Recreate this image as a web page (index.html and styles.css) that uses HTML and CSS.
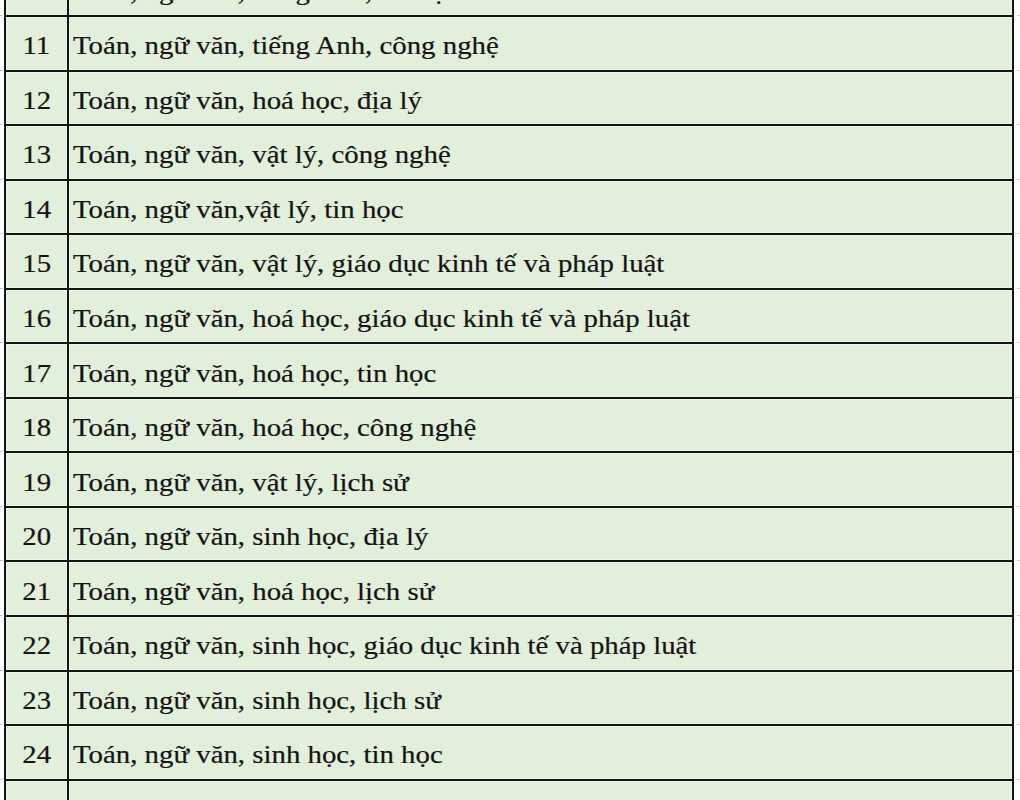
FILE: index.html
```html
<!DOCTYPE html>
<html lang="vi">
<head>
<meta charset="utf-8">
<title>Tổ hợp môn</title>
<link rel="stylesheet" href="styles.css">
</head>
<body>
<div class="sheet">
  <div class="row"><div class="num"><span>10</span></div><div class="txt"><span>Toán, ngữ văn, tiếng Anh, tin học</span></div></div>
  <div class="row"><div class="num"><span>11</span></div><div class="txt"><span>Toán, ngữ văn, tiếng Anh, công nghệ</span></div></div>
  <div class="row"><div class="num"><span>12</span></div><div class="txt"><span>Toán, ngữ văn, hoá học, địa lý</span></div></div>
  <div class="row"><div class="num"><span>13</span></div><div class="txt"><span>Toán, ngữ văn, vật lý, công nghệ</span></div></div>
  <div class="row"><div class="num"><span>14</span></div><div class="txt"><span>Toán, ngữ văn,vật lý, tin học</span></div></div>
  <div class="row"><div class="num"><span>15</span></div><div class="txt"><span>Toán, ngữ văn, vật lý, giáo dục kinh tế và pháp luật</span></div></div>
  <div class="row"><div class="num"><span>16</span></div><div class="txt"><span>Toán, ngữ văn, hoá học, giáo dục kinh tế và pháp luật</span></div></div>
  <div class="row"><div class="num"><span>17</span></div><div class="txt"><span>Toán, ngữ văn, hoá học, tin học</span></div></div>
  <div class="row"><div class="num"><span>18</span></div><div class="txt"><span>Toán, ngữ văn, hoá học, công nghệ</span></div></div>
  <div class="row"><div class="num"><span>19</span></div><div class="txt"><span>Toán, ngữ văn, vật lý, lịch sử</span></div></div>
  <div class="row"><div class="num"><span>20</span></div><div class="txt"><span>Toán, ngữ văn, sinh học, địa lý</span></div></div>
  <div class="row"><div class="num"><span>21</span></div><div class="txt"><span>Toán, ngữ văn, hoá học, lịch sử</span></div></div>
  <div class="row"><div class="num"><span>22</span></div><div class="txt"><span>Toán, ngữ văn, sinh học, giáo dục kinh tế và pháp luật</span></div></div>
  <div class="row"><div class="num"><span>23</span></div><div class="txt"><span>Toán, ngữ văn, sinh học, lịch sử</span></div></div>
  <div class="row"><div class="num"><span>24</span></div><div class="txt"><span>Toán, ngữ văn, sinh học, tin học</span></div></div>
  <div class="row"><div class="num"><span>25</span></div><div class="txt"><span>Toán, ngữ văn, sinh học, công nghệ</span></div></div>
</div>
</body>
</html>
```
FILE: styles.css
```css
html, body {
  margin: 0;
  padding: 0;
  background: #ffffff;
  overflow: hidden;
}

.sheet {
  width: 1010px;
  box-sizing: border-box;
  margin: -39.55px 0 0 4px;
  border: 2px solid #141414;
  border-bottom: none;
  font-family: "Liberation Serif", "Times New Roman", serif;
  font-size: 25.5px;
  color: #141414;
}

.row {
  position: relative;
  display: flex;
  height: 54.55px;
  box-sizing: border-box;
  border-bottom: 2px solid #141414;
}

.row::before,
.row::after {
  content: "";
  position: absolute;
  bottom: -1px;
  width: 3px;
  height: 1px;
  background: #cfcfcf;
}

.row::before {
  left: -6px;
}

.row::after {
  right: -8px;
}

.num,
.txt {
  display: flex;
  align-items: center;
  background: #e2efda;
  box-shadow: inset 0 0 0 1px #eef6e9;
  padding-top: 6px;
  box-sizing: border-box;
  white-space: nowrap;
}

.num span,
.txt span {
  display: inline-block;
  transform: scaleX(1.13);
  -webkit-text-stroke: 0.2px #141414;
}

.num {
  width: 63px;
  flex: none;
  justify-content: center;
  border-right: 2px solid #141414;
}

.num span {
  transform-origin: center center;
}

.txt {
  flex: 1;
  padding-left: 4px;
}

.txt span {
  transform-origin: left center;
}
```
